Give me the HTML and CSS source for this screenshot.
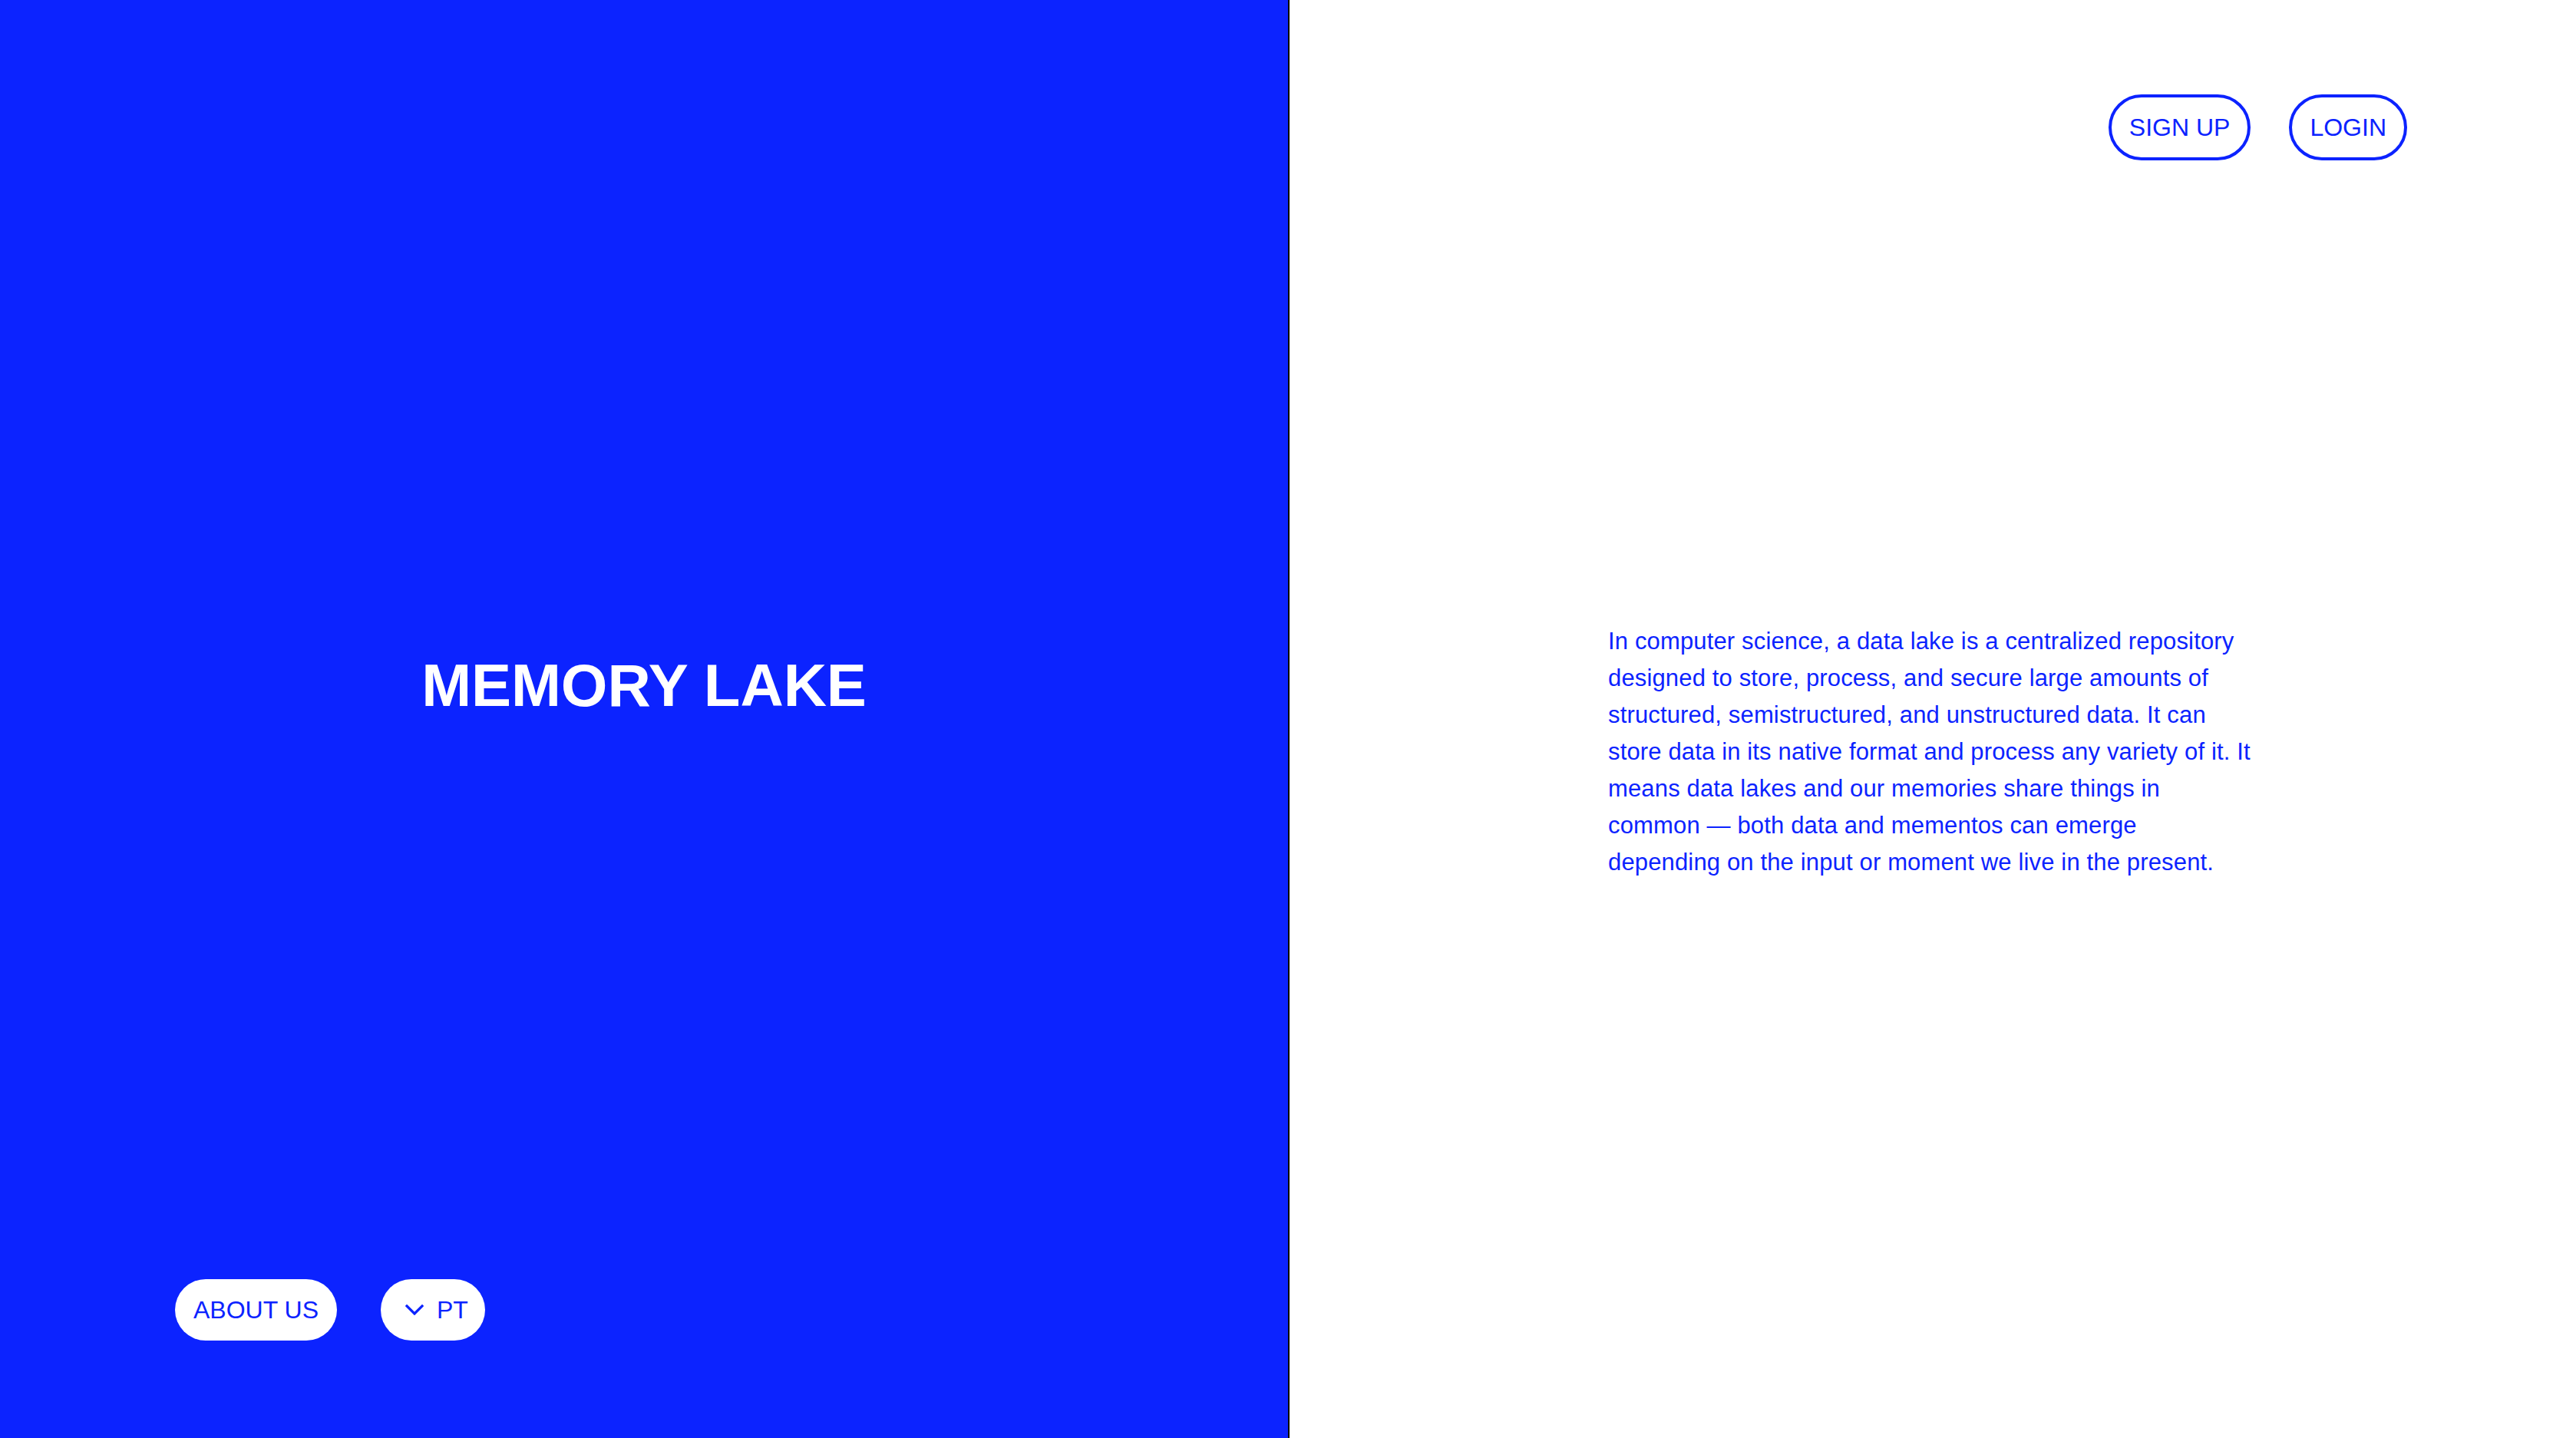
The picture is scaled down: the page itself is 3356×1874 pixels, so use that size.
FILE: index.html
```html
<!DOCTYPE html>
<html lang="en">
<head>
<meta charset="utf-8">
<title>Memory Lake</title>
<link rel="stylesheet" href="styles.css">
</head>
<body>
<div class="page">
  <section class="left">
    <div class="hero">
      <h1 class="title">MEMORY LAKE</h1>
    </div>
    <nav class="bottom-nav">
      <a class="pill pill-solid" href="#">ABOUT US</a>
      <a class="pill pill-solid pill-lang" href="#">
        <svg class="chev" width="24" height="14" viewBox="0 0 24 14" aria-hidden="true"><path d="M2 2 L12 12 L22 2" fill="none" stroke="currentColor" stroke-width="3.2" stroke-linecap="square"/></svg>
        <span>PT</span>
      </a>
    </nav>
  </section>
  <section class="right">
    <header class="top-nav">
      <a class="pill pill-outline" href="#">SIGN UP</a>
      <a class="pill pill-outline" href="#">LOGIN</a>
    </header>
    <p class="intro">In computer science, a data lake is a centralized repository<br>designed to store, process, and secure large amounts of<br>structured, semistructured, and unstructured data. It can<br>store data in its native format and process any variety of it. It<br>means data lakes and our memories share things in<br>common — both data and mementos can emerge<br>depending on the input or moment we live in the present.</p>
  </section>
</div>
</body>
</html>
```

FILE: styles.css
```css
* { box-sizing: border-box; }
html, body { margin: 0; padding: 0; }
body {
  font-family: "Liberation Sans", Arial, sans-serif;
  background: #ffffff;
  color: #0c23ff;
}
.page {
  display: flex;
  width: 3356px;
  height: 1874px;
  overflow: hidden;
}
.left {
  width: 1680px;
  flex: 0 0 1680px;
  background: #0c23ff;
  border-right: 2px solid #000;
  display: flex;
  flex-direction: column;
  padding: 118px 0 127px;
}
.hero {
  flex: 1;
  display: flex;
  align-items: center;
  justify-content: center;
}
.title {
  margin: 0;
  color: #ffffff;
  font-size: 78px;
  line-height: 1;
  font-weight: 700;
  letter-spacing: -0.1px;
}
.bottom-nav {
  display: flex;
  gap: 57px;
  padding-left: 228px;
}
.pill {
  display: inline-flex;
  align-items: center;
  border-radius: 999px;
  font-size: 32px;
  line-height: 1;
  text-decoration: none;
  color: #0c23ff;
  white-space: nowrap;
}
.pill-solid {
  background: #ffffff;
  height: 80px;
  padding: 0 24px;
}
.pill-lang {
  padding: 0 22px 0 32px;
  gap: 17px;
}
.chev { display: block; }
.pill-outline {
  height: 86px;
  padding: 0 23px;
  border: 4px solid #0c23ff;
  background: #ffffff;
}
.right {
  flex: 1;
  display: flex;
  flex-direction: column;
  padding-top: 123px;
}
.top-nav {
  display: flex;
  justify-content: flex-end;
  gap: 50px;
  padding-right: 220px;
}
.intro {
  margin: 603px 0 0 415px;
  max-width: 900px;
  font-size: 31px;
  line-height: 48px;
  letter-spacing: 0.15px;
  color: #0c23ff;
}
```
